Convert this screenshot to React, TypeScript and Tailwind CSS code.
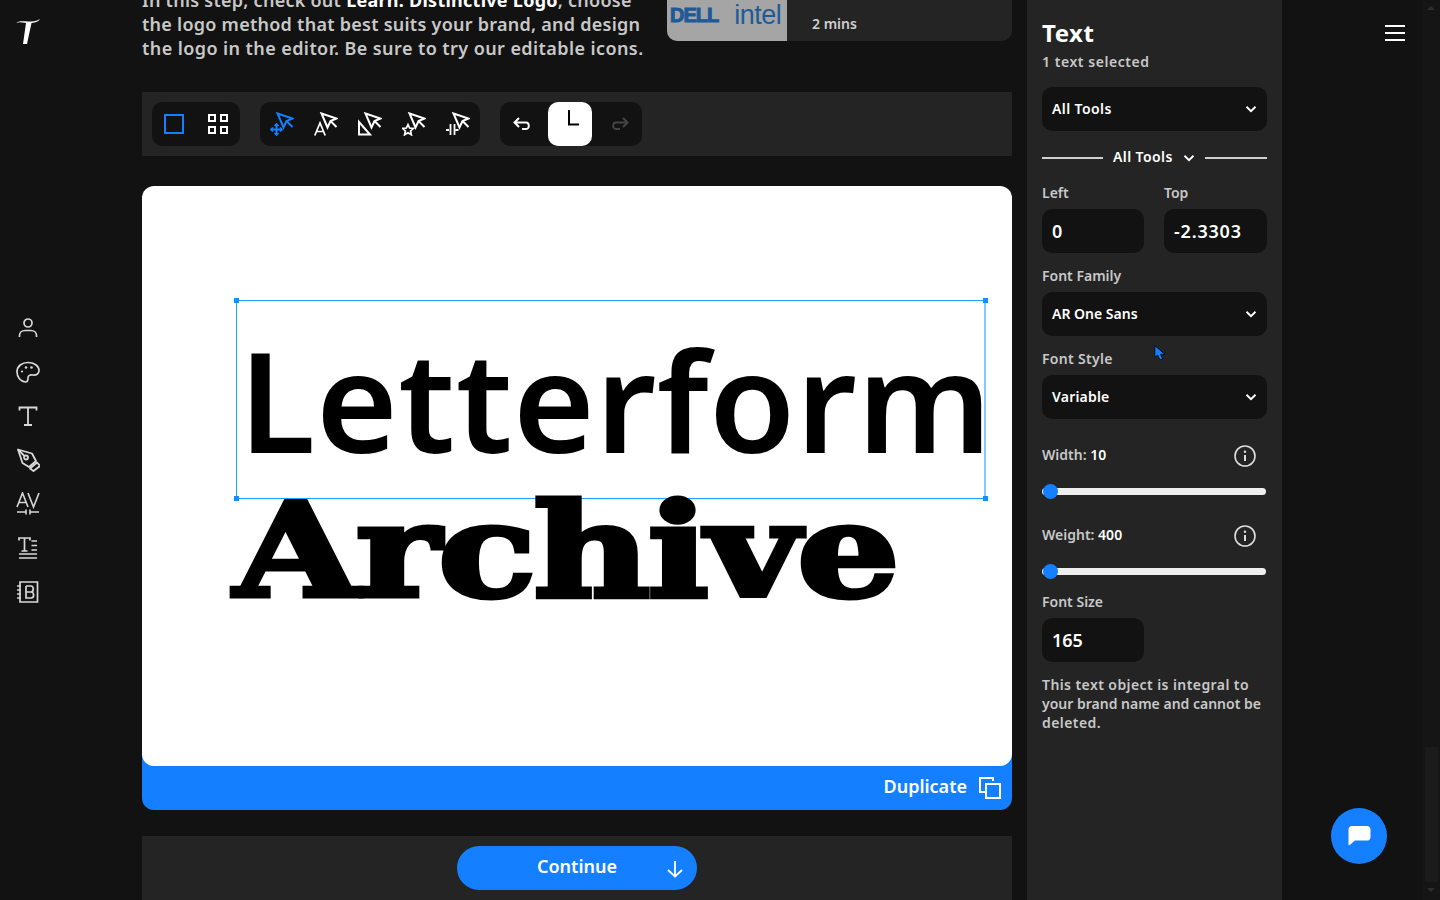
import React from "react";

const ui = "font-['Noto_Sans',sans-serif]";

function ToolIcon({ kind, className }: { kind: string; className: string }) {
  return (
    <svg viewBox="0 0 24 24" className={`h-6 w-6 ${className}`} fill="none" stroke="currentColor" strokeWidth="1.7">
      <g strokeWidth="2">
        <path d="M7.5 1.5 L22.5 6.5 L16.5 9 L13.5 15.5 Z" />
        <path d="M16.5 9 L22.5 15" />
      </g>
      {kind === "move" && (
        <g strokeWidth="2">
          <path d="M6.5 12 V23 M1 17.5 H12" />
          <path d="M4.5 14 L6.5 12 L8.5 14 M4.5 21 L6.5 23 L8.5 21 M3 15.5 L1 17.5 L3 19.5 M10 15.5 L12 17.5 L10 19.5" strokeWidth="1.7" />
        </g>
      )}
      {kind === "a" && <path d="M0.8 23.5 L6 11 L11.2 23.5 M2.6 19.5 H9.4" />}
      {kind === "tri" && <path d="M1 10 V22.5 H12 Z" strokeWidth="2" />}
      {kind === "star" && <path d="M6 12.5 L7.6 16 L11.4 16.4 L8.6 19 L9.4 22.8 L6 20.8 L2.6 22.8 L3.4 19 L0.6 16.4 L4.4 16 Z" />}
      {kind === "gap" && <path d="M0 18 H3 M9.5 18 H12.5 M4.5 12 V23 M8.5 12 V23" strokeWidth="1.8" />}
    </svg>
  );
}

function Chevron({ className = "" }: { className?: string }) {
  return (
    <svg viewBox="0 0 12 12" className={`h-3 w-3 ${className}`} fill="none" stroke="currentColor" strokeWidth="1.9">
      <path d="M1.5 3.8 L6 8.2 L10.5 3.8" />
    </svg>
  );
}

function Select({ label, className = "" }: { label: string; className?: string }) {
  return (
    <div className="flex h-11 items-center justify-between rounded-[10px] bg-[#121212] px-[10px]">
      <span className={`pb-[2px] text-[14px] font-semibold text-white ${className}`}>{label}</span>
      <Chevron className="text-white" />
    </div>
  );
}

function Label({ children, className = "" }: { children: React.ReactNode; className?: string }) {
  return <div className={`text-[14px] font-semibold leading-[19px] text-[#c8c8c8] ${className}`}>{children}</div>;
}

function Input({ value, className = "" }: { value: string; className?: string }) {
  return (
    <div className={`flex h-11 items-center rounded-[10px] bg-[#121212] pl-[10px] text-[18px] font-semibold text-white ${className}`}>
      {value}
    </div>
  );
}

function Info() {
  return (
    <svg viewBox="0 0 22 22" className="h-[22px] w-[22px] text-[#dddddd]" fill="none" stroke="currentColor" strokeWidth="1.6">
      <circle cx="11" cy="11" r="10" />
      <path d="M11 10 V16" strokeWidth="2" />
      <circle cx="11" cy="6.8" r="1.2" fill="currentColor" stroke="none" />
    </svg>
  );
}

function Slider() {
  return (
    <div className="relative h-[7px] w-[224px] rounded-full bg-[#eeeeee]">
      <div className="absolute left-[1px] top-[-4px] h-[15px] w-[15px] rounded-full bg-[#1580ff]" />
    </div>
  );
}

const sideIcon = "h-[24px] w-[24px] text-[#d8d8d8]";

function Sidebar() {
  return (
    <div className="flex w-[142px] shrink-0 flex-col pl-4">
      <div className="h-[316px] pt-[18px]">
        <svg viewBox="0 0 24 28" className="h-[28px] w-[24px] text-white">
          <path d="M0 5 C4 2.5 8 3.5 12 3.5 C16 3.5 20 3.5 24 1 C23 2.8 21 4.2 18.5 4.6 L15.5 5 L11 26 L7 26 L10 5 C6 4.4 3 3.8 0 5 Z" fill="currentColor" />
        </svg>
      </div>
      <div className="flex flex-col gap-5">
        <svg viewBox="0 0 24 24" className={sideIcon} fill="none" stroke="currentColor" strokeWidth="1.7">
          <circle cx="12" cy="7" r="4" />
          <path d="M3.5 21 V19.5 C3.5 16.5 6 14.5 9 14.5 H15 C18 14.5 20.5 16.5 20.5 19.5 V21" />
        </svg>
        <svg viewBox="0 0 24 24" className={sideIcon} fill="none" stroke="currentColor" strokeWidth="1.7">
          <path d="M9.5 22 C4.5 21.5 1 17 1 12 C1 6 6 2.5 12 2.5 C18 2.5 23 6 23 10.5 C23 14 20 15.5 17 15 C14 14.5 12 15.5 12 18 C12 20 11.5 22 9.5 22 Z" />
          <circle cx="6" cy="11.5" r="1.1" fill="currentColor" stroke="none" />
          <circle cx="10" cy="7.5" r="1.3" fill="currentColor" stroke="none" />
          <circle cx="15.5" cy="7.5" r="1.3" fill="currentColor" stroke="none" />
        </svg>
        <svg viewBox="0 0 24 24" className={sideIcon} fill="none" stroke="currentColor" strokeWidth="1.8">
          <path d="M3.5 6.5 V3.5 H20.5 V6.5 M12 3.5 V21 M8 21 H16" />
        </svg>
        <svg viewBox="0 0 24 24" className={sideIcon} fill="none" stroke="currentColor" strokeWidth="1.8" strokeLinejoin="round">
          <path d="M2 1.5 L16 5.5 L20 13 L13 19 L6.5 15 Z" />
          <path d="M14 20.5 L21 14.5 L24 18 L17.5 23 Z" />
          <circle cx="10" cy="9.5" r="2" />
          <path d="M2 1.5 L8.5 8" />
        </svg>
        <svg viewBox="0 0 24 24" className={sideIcon} fill="none" stroke="currentColor" strokeWidth="1.6">
          <path d="M1 15 L6.5 1 L12 15 M3 10.5 H10 M12 1 L17.5 15 L23 1" />
          <path d="M1 20 H10 M10 17.5 V22.5 M14 17.5 V22.5 M14 20 H23" />
        </svg>
        <svg viewBox="0 0 24 24" className={sideIcon} fill="none" stroke="currentColor" strokeWidth="1.7">
          <path d="M3 4.5 V2 H14 V4.5 M8.5 2 V15 M5.5 15 H11.5" />
          <path d="M15.5 5 H21 M15.5 9.5 H21 M15.5 14 H21 M3 18 H21 M3 22 H21" />
        </svg>
        <svg viewBox="0 0 24 24" className={sideIcon} fill="none" stroke="currentColor" strokeWidth="1.7">
          <path d="M4 2 H21.5 V22 H4 Z" />
          <path d="M1 6 H5 M1 10 H5 M1 14 H5 M1 18 H5" />
          <path d="M10 6 V18 H15 C18.5 18 18.5 12 15 12 H10 M15 12 C18 12 18 6 15 6 H10" />
        </svg>
      </div>
    </div>
  );
}

function Toolbar() {
  return (
    <div className="mt-8 flex h-16 items-center gap-5 bg-[#242424] pl-[10px]">
      <div className="flex h-11 w-[88px] items-center rounded-[10px] bg-[#121212]">
        <div className="flex w-11 justify-center">
          <div className="h-5 w-5 border-2 border-[#1580ff]" />
        </div>
        <div className="flex w-11 justify-center">
          <div className="grid grid-cols-2 gap-1">
            <div className="h-2 w-2 border-2 border-white" />
            <div className="h-2 w-2 border-2 border-white" />
            <div className="h-2 w-2 border-2 border-white" />
            <div className="h-2 w-2 border-2 border-white" />
          </div>
        </div>
      </div>
      <div className="flex h-11 w-[220px] items-center rounded-[10px] bg-[#121212]">
        <div className="flex w-11 justify-center"><ToolIcon kind="move" className="text-[#1580ff]" /></div>
        <div className="flex w-11 justify-center"><ToolIcon kind="a" className="text-white" /></div>
        <div className="flex w-11 justify-center"><ToolIcon kind="tri" className="text-white" /></div>
        <div className="flex w-11 justify-center"><ToolIcon kind="star" className="text-white" /></div>
        <div className="flex w-11 justify-center"><ToolIcon kind="gap" className="text-white" /></div>
      </div>
      <div className="flex h-11 w-[142px] items-center rounded-[10px] bg-[#121212]">
        <div className="flex w-12 justify-center pr-1 text-white">
          <svg viewBox="0 0 20 20" className="h-5 w-5" fill="none" stroke="currentColor" strokeWidth="2">
            <path d="M7 4 L2.5 8.5 L7 13 M2.5 8.5 H14 C17.5 8.5 18 15 14 15 H10" />
          </svg>
        </div>
        <div className="flex h-11 w-11 justify-center rounded-[10px] bg-white pl-[6px] pt-[8px] text-black">
          <svg viewBox="0 0 14 16" className="h-4 w-[14px]" fill="none" stroke="currentColor" strokeWidth="2">
            <path d="M3 0 V14.5 H13" />
          </svg>
        </div>
        <div className="flex w-[50px] justify-center pl-[6px] text-[#444444]">
          <svg viewBox="0 0 20 20" className="h-5 w-5" fill="none" stroke="currentColor" strokeWidth="2">
            <path d="M13 4 L17.5 8.5 L13 13 M17.5 8.5 H6 C2.5 8.5 2 15 6 15 H10" />
          </svg>
        </div>
      </div>
    </div>
  );
}

function Canvas() {
  return (
    <div className="mt-[30px]">
      <div className="relative z-10 h-[580px] overflow-hidden rounded-[12px] bg-white">
        <div className="absolute left-[94px] top-[114px] h-[199px] w-[750px] border border-[#1fa5ff] border-r-2 border-r-[#7fcbff]" />
        {[
          "left-[92px] top-[112px]",
          "left-[841px] top-[112px]",
          "left-[92px] top-[310px]",
          "left-[841px] top-[310px]",
        ].map((p) => (
          <div key={p} className={`absolute h-[5px] w-[5px] bg-[#1a8cff] ${p}`} />
        ))}
        <div className="absolute left-[97px] top-[115px] whitespace-nowrap font-['Noto_Sans',sans-serif] text-[140px] font-semibold leading-[196px] tracking-[0.5px] text-black">
          Letterform
        </div>
        <div className="absolute left-[92px] top-[290px] h-[140px] origin-left scale-x-[1.245] whitespace-nowrap font-['DejaVu_Serif',serif] text-[129px] font-bold leading-[150px] tracking-[-2px] text-black [-webkit-text-stroke:5px_black]">
          Archive
        </div>
      </div>
      <div className="-mt-3 flex h-[56px] items-center justify-end rounded-b-[12px] bg-[#1580ff] pr-[11px] pt-[12px] text-white">
        <span className="pb-[4px] text-[18px] font-semibold">Duplicate</span>
        <svg viewBox="0 0 22 22" className="ml-3 h-[22px] w-[22px]" fill="none" stroke="currentColor" strokeWidth="2">
          <path d="M6 15 H1 V1 H14 V4" />
          <path d="M7 7 H21 V21 H7 Z" />
        </svg>
      </div>
    </div>
  );
}

function Main() {
  return (
    <div className="w-[870px] shrink-0">
      <div className="-mt-3 flex items-start">
        <p className="w-[525px] shrink-0 text-[18px] font-semibold leading-6 tracking-[0.26px] text-[#c8c8c8]">
          In this step, check out <b className="font-bold text-white">Learn: Distinctive Logo</b>, choose
          <br />
          the logo method that best suits your brand, and design
          <br />
          <span className="tracking-[0.42px]">the logo in the editor. Be sure to try our editable icons.</span>
        </p>
        <div className="flex h-[53px] w-[345px] overflow-hidden rounded-b-[10px] bg-[#242424]">
          <div className="flex w-[120px] items-end gap-4 bg-[#a5a5a5] pb-[14px] pl-[3px]">
            <span className="font-['Liberation_Sans',sans-serif] text-[20px] font-bold leading-6 tracking-[-1px] text-[#1f5a96] [-webkit-text-stroke:1px_#1f5a96]">DELL</span>
            <span className="font-['Liberation_Sans',sans-serif] text-[27px] leading-6 tracking-[-0.5px] text-[#1f5a96]">intel</span>
          </div>
          <div className="flex items-end pb-[7px] pl-[25px] text-[14px] font-semibold text-[#d0d0d0]">2 mins</div>
        </div>
      </div>
      <Toolbar />
      <Canvas />
      <div className="mt-[26px] flex h-16 justify-center bg-[#242424] pt-[10px]">
        <div className="relative flex h-11 w-[240px] items-center justify-center rounded-full bg-[#1580ff] text-white">
          <span className="pb-[3px] text-[18px] font-semibold">Continue</span>
          <svg viewBox="0 0 18 18" className="absolute right-[13px] top-[14px] h-[18px] w-[18px]" fill="none" stroke="currentColor" strokeWidth="1.8">
            <path d="M9 1 V16.5 M2 10 L9 16.5 L16 10" />
          </svg>
        </div>
      </div>
    </div>
  );
}

function Panel() {
  return (
    <div className="relative w-[255px] shrink-0 bg-[#242424] px-[15px] pt-[17px]">
      <div className="text-[24px] font-bold leading-8 tracking-[0.5px] text-white">Text</div>
      <Label className="mt-[3px] tracking-[0.55px]">1 text selected</Label>
      <div className="mt-4"><Select label="All Tools" className="tracking-[0.4px]" /></div>
      <div className="mt-[17px] flex h-5 items-center">
        <div className="h-[2px] w-[61px] bg-[#d0d0d0]" />
        <span className="ml-[10px] pb-[3px] text-[14px] font-semibold tracking-[0.4px] text-white">All Tools</span>
        <Chevron className="ml-[10px] text-white" />
        <div className="ml-[10px] h-[2px] flex-1 bg-[#d0d0d0]" />
      </div>
      <div className="mt-[15px] flex gap-5">
        <div className="w-[102px]">
          <Label className="mb-[7px]">Left</Label>
          <Input value="0" />
        </div>
        <div className="flex-1">
          <Label className="mb-[7px]">Top</Label>
          <Input value="-2.3303" className="tracking-[0.8px]" />
        </div>
      </div>
      <Label className="mb-[7px] mt-[13px]">Font Family</Label>
      <Select label="AR One Sans" />
      <Label className="mb-[7px] mt-[13px] tracking-[0.3px]">Font Style</Label>
      <Select label="Variable" className="tracking-[0.2px]" />
      <div className="mt-[26px] flex h-[22px] items-center justify-between pr-[11px]">
        <Label className="pb-[4px]">Width: <span className="text-white">10</span></Label>
        <Info />
      </div>
      <div className="mt-[21px]"><Slider /></div>
      <div className="mt-[30px] flex h-[22px] items-center justify-between pr-[11px]">
        <Label className="pb-[4px]">Weight: <span className="text-white">400</span></Label>
        <Info />
      </div>
      <div className="mt-[21px]"><Slider /></div>
      <Label className="mb-[7px] mt-[17px]">Font Size</Label>
      <Input value="165" className="w-[102px]" />
      <p className="mt-[13px] whitespace-nowrap text-[14px] font-semibold leading-[19px] text-[#c8c8c8]">
        <span className="tracking-[0.42px]">This text object is integral to</span>
        <br />
        your brand name and cannot be
        <br />
        <span className="tracking-[0.42px]">deleted.</span>
      </p>
      <svg viewBox="0 0 11 15" className="absolute left-[127px] top-[345px] h-[16px] w-[12px]">
        <path d="M0.7 0.7 L0.7 11.5 L3.4 9.4 L5.4 14 L8 13 L6 8.8 L10 8.6 Z" fill="#1580ff" stroke="#000" strokeWidth="0.7" />
      </svg>
    </div>
  );
}

export default function App() {
  return (
    <div className={`flex h-[900px] w-[1440px] overflow-hidden bg-[#121212] ${ui}`}>
      <Sidebar />
      <Main />
      <div className="w-[15px] shrink-0" />
      <Panel />
      <div className="relative w-[141px] shrink-0">
        <div className="absolute right-[18px] top-[25px] flex w-5 flex-col gap-[5px]">
          <div className="h-[2px] bg-white" />
          <div className="h-[2px] bg-white" />
          <div className="h-[2px] bg-white" />
        </div>
        <div className="absolute left-[49px] top-[808px] flex h-14 w-14 items-center justify-center rounded-full bg-[#1580ff]">
          <svg viewBox="0 0 26 24" className="h-[22px] w-[25px]">
            <path d="M5 1 H21 C23.5 1 25 2.5 25 5 V13 C25 15.5 23.5 17 21 17 H8 L2 22 C1.5 22.3 1 22 1 21 V5 C1 2.5 2.5 1 5 1 Z" fill="#ffffff" />
          </svg>
        </div>
      </div>
      <div className="relative w-[17px] shrink-0 bg-[#151515]">
        <svg viewBox="0 0 8 4" className="absolute left-[4px] top-[6px] h-1 w-2"><path d="M4 0 L8 4 H0 Z" fill="#2e2e2e" /></svg>
        <div className="absolute left-[2px] top-[747px] h-[135px] w-[13px] bg-[#1b1b1b]" />
        <svg viewBox="0 0 8 4" className="absolute left-[4px] top-[888px] h-1 w-2"><path d="M4 4 L8 0 H0 Z" fill="#2e2e2e" /></svg>
      </div>
    </div>
  );
}
